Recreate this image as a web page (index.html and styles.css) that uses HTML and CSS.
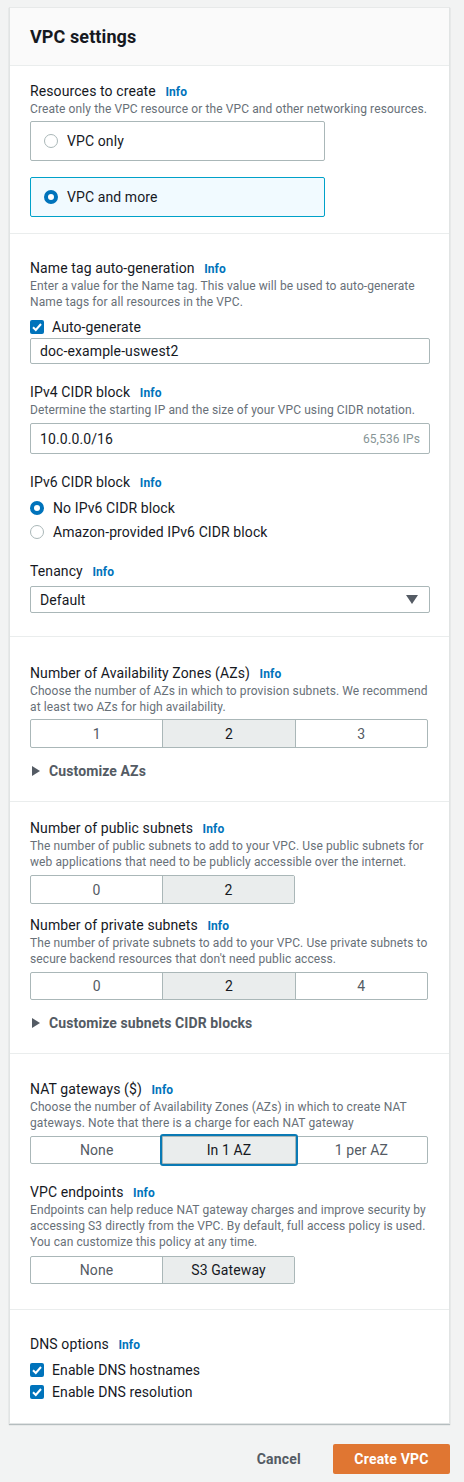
FILE: index.html
```html
<!DOCTYPE html>
<html lang="en">
<head>
<meta charset="utf-8">
<title>VPC settings</title>
<link rel="stylesheet" href="styles.css">
</head>
<body>
<div class="page">
  <div class="card">
    <div class="card-header"><h2>VPC settings</h2></div>

    <div class="section s1">
      <div class="label">Resources to create <span class="info">Info</span></div>
      <div class="desc">Create only the VPC resource or the VPC and other networking resources.</div>
      <div class="tiles">
        <div class="tile"><span class="radio"></span>VPC only</div>
        <div class="tile selected"><span class="radio on"></span>VPC and more</div>
      </div>
    </div>

    <div class="section s2">
      <div class="label">Name tag auto-generation <span class="info">Info</span></div>
      <div class="desc">Enter a value for the Name tag. This value will be used to auto-generate Name tags for all resources in the VPC.</div>
      <div class="check-row first"><span class="checkbox"><svg viewBox="0 0 14 14" width="14" height="14"><path d="M3 7.2 L5.8 10 L11 4" fill="none" stroke="#fff" stroke-width="2"/></svg></span>Auto-generate</div>
      <div class="input name-input">doc-example-uswest2</div>

      <div class="label mt18">IPv4 CIDR block <span class="info">Info</span></div>
      <div class="desc">Determine the starting IP and the size of your VPC using CIDR notation.</div>
      <div class="input cidr-input"><span>10.0.0.0/16</span><span class="hint">65,536 IPs</span></div>

      <div class="label mt18">IPv6 CIDR block <span class="info">Info</span></div>
      <div class="radio-list">
        <div class="radio-row"><span class="radio on"></span>No IPv6 CIDR block</div>
        <div class="radio-row"><span class="radio"></span>Amazon-provided IPv6 CIDR block</div>
      </div>

      <div class="label mt17">Tenancy <span class="info">Info</span></div>
      <div class="input select"><span>Default</span><svg class="caret" viewBox="0 0 12 10" width="12" height="10"><path d="M0 0 H12 L6 9 Z" fill="#545b64"/></svg></div>
    </div>

    <div class="section s3">
      <div class="label">Number of Availability Zones (AZs) <span class="info">Info</span></div>
      <div class="desc">Choose the number of AZs in which to provision subnets. We recommend at least two AZs for high availability.</div>
      <div class="seg seg3 h29">
        <div class="seg-item">1</div>
        <div class="seg-item active">2</div>
        <div class="seg-item">3</div>
      </div>
      <div class="expander"><svg viewBox="0 0 8 10" width="8" height="10"><path d="M0 0 L8 5 L0 10 Z" fill="#545b64"/></svg>Customize AZs</div>
    </div>

    <div class="section s4">
      <div class="label">Number of public subnets <span class="info">Info</span></div>
      <div class="desc">The number of public subnets to add to your VPC. Use public subnets for web applications that need to be publicly accessible over the internet.</div>
      <div class="seg seg2 h29">
        <div class="seg-item">0</div>
        <div class="seg-item active">2</div>
      </div>
      <div class="label mt11">Number of private subnets <span class="info">Info</span></div>
      <div class="desc">The number of private subnets to add to your VPC. Use private subnets to secure backend resources that don't need public access.</div>
      <div class="seg seg3 h28">
        <div class="seg-item">0</div>
        <div class="seg-item active">2</div>
        <div class="seg-item">4</div>
      </div>
      <div class="expander"><svg viewBox="0 0 8 10" width="8" height="10"><path d="M0 0 L8 5 L0 10 Z" fill="#545b64"/></svg>Customize subnets CIDR blocks</div>
    </div>

    <div class="section s5">
      <div class="label">NAT gateways ($) <span class="info">Info</span></div>
      <div class="desc">Choose the number of Availability Zones (AZs) in which to create NAT gateways. Note that there is a charge for each NAT gateway</div>
      <div class="seg seg3 h28">
        <div class="seg-item">None</div>
        <div class="seg-item active focus">In 1 AZ</div>
        <div class="seg-item">1 per AZ</div>
      </div>
      <div class="label mt18">VPC endpoints <span class="info">Info</span></div>
      <div class="desc">Endpoints can help reduce NAT gateway charges and improve security by accessing S3 directly from the VPC. By default, full access policy is used. You can customize this policy at any time.</div>
      <div class="seg seg2 h28 mt6">
        <div class="seg-item">None</div>
        <div class="seg-item active">S3 Gateway</div>
      </div>
    </div>

    <div class="section s6">
      <div class="label">DNS options <span class="info">Info</span></div>
      <div class="check-list">
        <div class="check-row"><span class="checkbox"><svg viewBox="0 0 14 14" width="14" height="14"><path d="M3 7.2 L5.8 10 L11 4" fill="none" stroke="#fff" stroke-width="2"/></svg></span>Enable DNS hostnames</div>
        <div class="check-row"><span class="checkbox"><svg viewBox="0 0 14 14" width="14" height="14"><path d="M3 7.2 L5.8 10 L11 4" fill="none" stroke="#fff" stroke-width="2"/></svg></span>Enable DNS resolution</div>
      </div>
    </div>
  </div>

  <div class="actions">
    <button class="btn-link">Cancel</button>
    <button class="btn-primary">Create VPC</button>
  </div>
</div>
</body>
</html>
```

FILE: styles.css
```css
* { box-sizing: border-box; }
html, body { margin: 0; padding: 0; }
body {
  background: #f2f3f3;
  font-family: Roboto, "Noto Sans", Arial, sans-serif;
  color: #16191f;
  font-size: 14px;
}
.page { padding: 7px 14px 0 9px; width: 464px; }
.card {
  background: #fff;
  border: 1px solid #e1e4e4;
  border-top-color: #e7e9e9;
  box-shadow: 0 1px 1px rgba(0, 28, 36, 0.25);
  width: 441px;
}
.card-header {
  background: #fafafa;
  border-bottom: 1px solid #eaeded;
  height: 58px;
  padding: 0 20px;
  display: flex;
  align-items: center;
}
.card-header h2 {
  margin: 0;
  font-size: 18px;
  font-weight: 700;
  line-height: 22px;
  letter-spacing: 0.1px;
}
.section {
  padding: 0 20px;
  border-bottom: 1px solid #eaeded;
  display: flex;
  flex-direction: column;
  align-items: flex-start;
}
.section:last-child { border-bottom: none; }
.s1 { padding-top: 15px; padding-bottom: 16px; }
.s2 { padding-top: 24px; padding-bottom: 23px; }
.s3 { padding-top: 26px; padding-bottom: 20px; }
.s4 { padding-top: 16px; padding-bottom: 20px; }
.s5 { padding-top: 25px; padding-bottom: 25px; }
.s6 { padding-top: 24px; padding-bottom: 20px; }

.label {
  font-size: 14px;
  line-height: 20px;
  height: 20px;
  color: #16191f;
  letter-spacing: 0.1px;
}
.info {
  color: #0073bb;
  font-weight: 700;
  font-size: 12px;
  line-height: 12px;
  margin-left: 6px;
  letter-spacing: 0.1px;
}
.desc {
  font-size: 12px;
  line-height: 16px;
  color: #687078;
  letter-spacing: 0.1px;
}
.mt18 { margin-top: 18px; }
.mt17 { margin-top: 17px; }
.mt11 { margin-top: 11px; }
.mt6 { margin-top: 6px !important; }

.tiles {
  margin-top: 4px;
  display: flex;
  flex-direction: column;
  gap: 16px;
}
.tile {
  width: 295px;
  height: 40px;
  border: 1px solid #aab7b8;
  border-radius: 2px;
  display: flex;
  align-items: center;
  padding-left: 13px;
  font-size: 14px;
  letter-spacing: 0.1px;
}
.tile.selected {
  background: #f1faff;
  border-color: #00a1c9;
}
.radio {
  width: 14px;
  height: 14px;
  border-radius: 50%;
  border: 1px solid #aab7b8;
  background: #fff;
  margin-right: 9px;
  flex: none;
}
.radio.on {
  border: 4px solid #0073bb;
}

.check-row {
  display: flex;
  align-items: center;
  height: 22px;
  font-size: 14px;
  letter-spacing: 0.1px;
}
.check-row.first { margin-top: 6px; }
.checkbox {
  width: 14px;
  height: 14px;
  background: #0073bb;
  border-radius: 2px;
  margin-right: 8px;
  display: flex;
  flex: none;
}
.check-list { margin-top: 5px; }

.input {
  width: 400px;
  border: 1px solid #aab7b8;
  border-radius: 2px;
  display: flex;
  align-items: center;
  padding: 0 9px;
  font-size: 14px;
  color: #16191f;
  letter-spacing: 0.1px;
}
.name-input { height: 26px; }
.cidr-input {
  height: 31px;
  margin-top: 5px;
  justify-content: space-between;
}
.hint { font-size: 12px; color: #879596; }
.select {
  height: 27px;
  margin-top: 5px;
  justify-content: space-between;
  padding-right: 11px;
}

.radio-list { margin-top: 4px; display: flex; flex-direction: column; }
.radio-row {
  height: 24px;
  display: flex;
  align-items: center;
  font-size: 14px;
  letter-spacing: 0.1px;
}

.seg {
  margin-top: 4px;
  display: flex;
  border: 1px solid #aab7b8;
  border-radius: 2px;
  position: relative;
}
.s4 .seg, .s5 .seg { margin-top: 5px; }
.seg3 { width: 398px; }
.seg2 { width: 265px; }
.h29 { height: 29px; }
.h28 { height: 28px; }
.seg-item {
  flex: 1;
  display: flex;
  align-items: center;
  justify-content: center;
  font-size: 14px;
  color: #545b64;
  border-left: 1px solid #aab7b8;
  position: relative;
  letter-spacing: 0.1px;
}
.seg-item:first-child { border-left: none; }
.seg-item.active {
  background: #eaeded;
  color: #16191f;
}
.seg-item.focus::after {
  content: "";
  position: absolute;
  left: -3px;
  right: -3px;
  top: -3px;
  bottom: -3px;
  border: 2px solid #0a7ab5;
  border-radius: 3px;
}

.expander {
  margin-top: 13px;
  height: 20px;
  display: flex;
  align-items: center;
  font-weight: 700;
  font-size: 14px;
  color: #545b64;
  letter-spacing: 0.1px;
}
.expander svg { margin: 0 9px 0 2px; }

.actions {
  display: flex;
  justify-content: flex-end;
  align-items: center;
  gap: 32px;
  margin-top: 20px;
  width: 441px;
}
.btn-link {
  background: none;
  border: none;
  font-family: inherit;
  font-size: 14px;
  font-weight: 700;
  color: #545b64;
  padding: 0;
  letter-spacing: 0.2px;
}
.btn-primary {
  background: #e07632;
  border: none;
  border-radius: 2px;
  color: #fff;
  font-family: inherit;
  font-size: 14px;
  font-weight: 700;
  width: 117px;
  height: 30px;
  padding: 0;
  letter-spacing: 0.2px;
}
```
